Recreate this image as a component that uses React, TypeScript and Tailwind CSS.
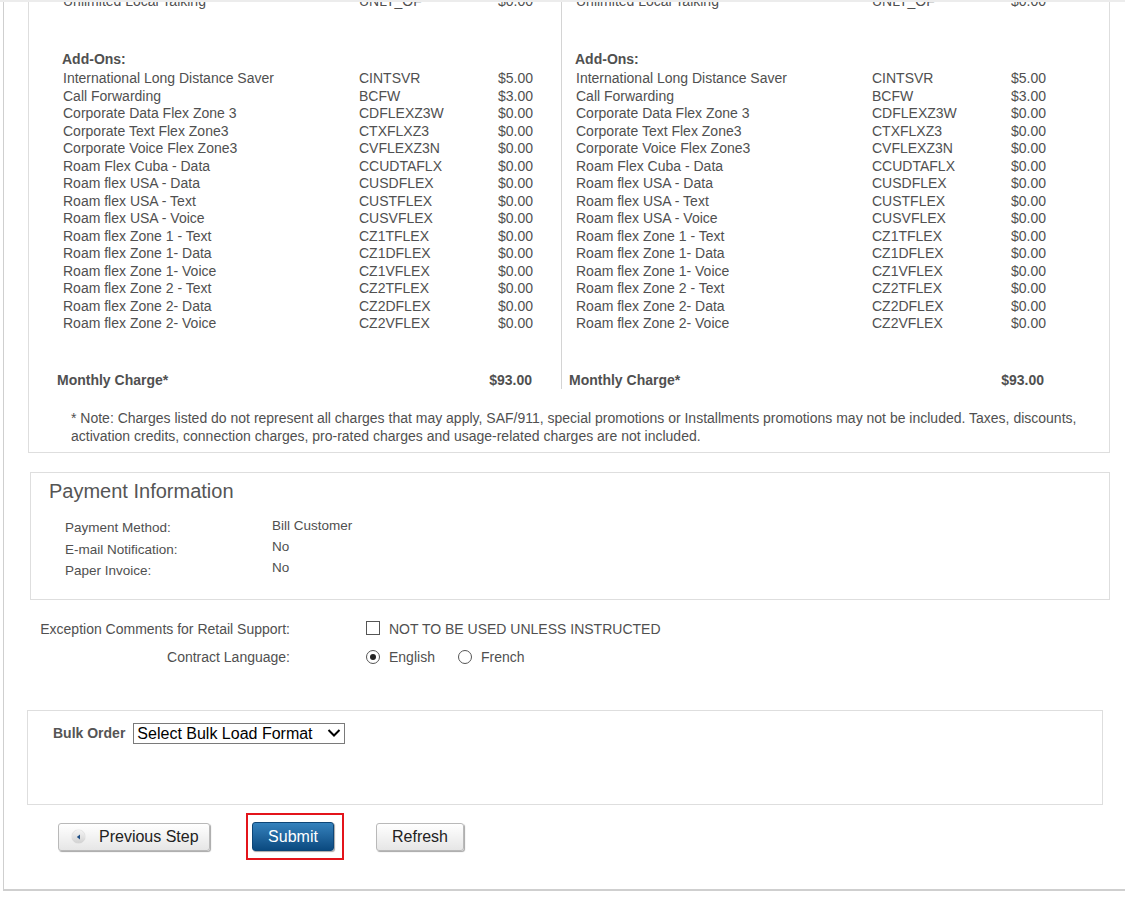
import React from 'react';

// Rate plan / add-on summary, payment info and submit bar — order review step.

type Line = { name: string; code: string; price: string };

const addOns: Line[] = [
  { name: 'International Long Distance Saver', code: 'CINTSVR', price: '$5.00' },
  { name: 'Call Forwarding', code: 'BCFW', price: '$3.00' },
  { name: 'Corporate Data Flex Zone 3', code: 'CDFLEXZ3W', price: '$0.00' },
  { name: 'Corporate Text Flex Zone3', code: 'CTXFLXZ3', price: '$0.00' },
  { name: 'Corporate Voice Flex Zone3', code: 'CVFLEXZ3N', price: '$0.00' },
  { name: 'Roam Flex Cuba - Data', code: 'CCUDTAFLX', price: '$0.00' },
  { name: 'Roam flex USA - Data', code: 'CUSDFLEX', price: '$0.00' },
  { name: 'Roam flex USA - Text', code: 'CUSTFLEX', price: '$0.00' },
  { name: 'Roam flex USA - Voice', code: 'CUSVFLEX', price: '$0.00' },
  { name: 'Roam flex Zone 1 - Text', code: 'CZ1TFLEX', price: '$0.00' },
  { name: 'Roam flex Zone 1- Data', code: 'CZ1DFLEX', price: '$0.00' },
  { name: 'Roam flex Zone 1- Voice', code: 'CZ1VFLEX', price: '$0.00' },
  { name: 'Roam flex Zone 2 - Text', code: 'CZ2TFLEX', price: '$0.00' },
  { name: 'Roam flex Zone 2- Data', code: 'CZ2DFLEX', price: '$0.00' },
  { name: 'Roam flex Zone 2- Voice', code: 'CZ2VFLEX', price: '$0.00' },
];

function Row({ l }: { l: Line }) {
  return (
    <div className="grid grid-cols-[296px_110px_64px] leading-[17.5px]">
      <span>{l.name}</span>
      <span>{l.code}</span>
      <span className="text-right">{l.price}</span>
    </div>
  );
}

function PlanColumn({ left }: { left: boolean }) {
  return (
    <div className={left ? 'border-r border-[#d4d4d4] pl-[34px]' : 'pl-[14px]'}>
      <Row l={{ name: 'Unlimited Local Talking', code: 'UNLT_OF', price: '$0.00' }} />
      <div className="mt-[40px] -ml-px font-bold leading-[17.5px]">Add-Ons:</div>
      <div className="mt-[2px]">
        {addOns.map((l) => (
          <Row key={l.code} l={l} />
        ))}
      </div>
      <div className={`mt-[39px] flex justify-between font-bold leading-[17.5px] ${left ? '-ml-[6px] w-[475px]' : '-ml-[7px] w-[475px]'}`}>
        <span>Monthly Charge*</span>
        <span>$93.00</span>
      </div>
    </div>
  );
}

function GreyButton({ children, className = '' }: { children: React.ReactNode; className?: string }) {
  return (
    <button
      className={`flex h-[28px] items-center rounded-[3px] border border-[#b9b9b9] bg-gradient-to-b from-white to-[#e6e6e6] text-[16px] text-[#222] shadow-[1px_1px_1px_rgba(0,0,0,0.35)] ${className}`}
    >
      {children}
    </button>
  );
}

export default function App() {
  return (
    <div className="min-h-screen bg-white font-['Liberation_Sans',Arial,sans-serif] text-[14px] text-[#505050]">
      <div className="h-[2px] bg-[#ececec]" />
      <div className="overflow-hidden">
        <div className="-mt-[9px] ml-[3px] h-[898px] border-b-2 border-l border-[#cfcfcf]">
          {/* plan summary box (scrolled, top cut off) */}
          <div className="ml-[24px] w-[1082px] border-x border-b border-[#dedede] pb-[7px]">
            <div className="grid grid-cols-[533px_1fr]">
              <PlanColumn left />
              <PlanColumn left={false} />
            </div>
            <p className="mt-[20px] pl-[42px] pr-[4px] leading-[18px]">
              * Note: Charges listed do not represent all charges that may apply, SAF/911, special promotions or
              Installments promotions may not be included. Taxes, discounts, activation credits, connection charges,
              pro-rated charges and usage-related charges are not included.
            </p>
          </div>

          {/* payment */}
          <div className="ml-[26px] mt-[19px] h-[128px] w-[1080px] border border-[#dedede] pl-[18px] pt-[6px]">
            <h2 className="text-[20px] leading-[24px] text-[#555]">Payment Information</h2>
            <div className="mt-[14px] grid grid-cols-[207px_1fr] pl-[16px] text-[13.5px]">
              <span className="leading-[21.5px]">Payment Method:</span>
              <span className="-mt-[2px] leading-[21.5px]">Bill Customer</span>
              <span className="leading-[21.5px]">E-mail Notification:</span>
              <span className="-mt-[3px] leading-[21.5px]">No</span>
              <span className="leading-[21.5px]">Paper Invoice:</span>
              <span className="-mt-[3px] leading-[21.5px]">No</span>
            </div>
          </div>

          {/* options */}
          <div className="mt-[15px] grid grid-cols-[286px_1fr] gap-x-[76px]">
            <span className="text-right leading-[28px]">Exception Comments for Retail Support:</span>
            <label className="flex items-center leading-[28px]">
              <span className="mr-[9px] -mt-[2px] h-[14px] w-[14px] border border-[#555] bg-white" />
              NOT TO BE USED UNLESS INSTRUCTED
            </label>
            <span className="text-right leading-[28px]">Contract Language:</span>
            <div className="flex items-center leading-[28px]">
              <span className="mr-[9px] flex h-[14px] w-[14px] items-center justify-center rounded-full border border-[#555]">
                <span className="h-[6px] w-[6px] rounded-full bg-[#222]" />
              </span>
              English
              <span className="ml-[23px] mr-[9px] h-[14px] w-[14px] rounded-full border border-[#555]" />
              French
            </div>
          </div>

          {/* bulk order */}
          <div className="ml-[23px] mt-[39px] h-[95px] w-[1076px] border border-[#dedede] pl-[25px] pt-[12px]">
            <div className="flex items-center">
              <span className="font-bold text-[#555]">Bulk Order</span>
              <div className="relative ml-[8px] h-[21px] w-[212px]">
                <select className="h-[21px] w-[212px] appearance-none border border-[#7a7a7a] bg-white pl-[3px] text-[16px] leading-[19px] text-black outline-none">
                  <option>Select Bulk Load Format</option>
                </select>
                <svg className="pointer-events-none absolute right-[4px] top-[5px]" width="14" height="10" viewBox="0 0 14 10">
                  <path d="M1.5 2 L7 7.5 L12.5 2" fill="none" stroke="#000" strokeWidth="2" />
                </svg>
              </div>
            </div>
          </div>

          {/* actions */}
          <div className="ml-[54px] mt-[8px] flex items-center">
            <GreyButton className="w-[152px] pl-[13px]">
              <span className="mr-[14px] flex h-[13px] w-[13px] items-center justify-center rounded-full bg-gradient-to-b from-[#f4f4f4] to-[#d2d2d2] shadow-[0_0_1px_rgba(0,0,0,0.4)]">
                <svg width="5" height="6" viewBox="0 0 5 6">
                  <path d="M4 0.5 L0.8 3 L4 5.5 Z" fill="#1f4f86" />
                </svg>
              </span>
              Previous Step
            </GreyButton>
            <div className="ml-[36px] border-2 border-[#e3141b] pb-[7px] pl-[4px] pr-[8px] pt-[7px]">
              <button className="h-[29px] w-[82px] rounded-[3px] border border-[#0d4677] bg-gradient-to-b from-[#3582bd] to-[#0a4a80] text-[16px] text-white shadow-[1px_1px_1px_rgba(0,0,0,0.35)]">
                Submit
              </button>
            </div>
            <GreyButton className="ml-[32px] w-[88px] justify-center">Refresh</GreyButton>
          </div>
        </div>
      </div>
    </div>
  );
}
